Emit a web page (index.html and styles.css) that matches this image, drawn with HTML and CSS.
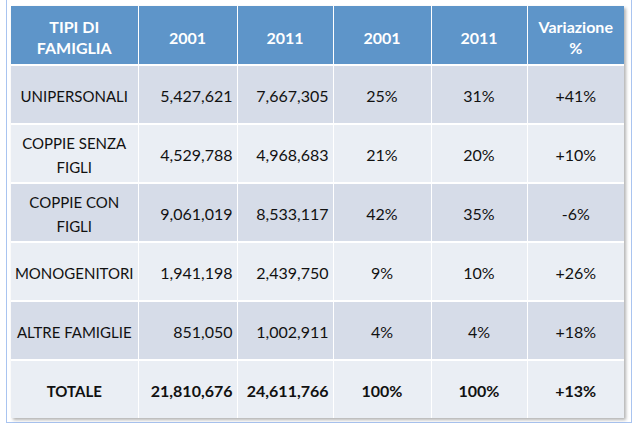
FILE: index.html
```html
<!DOCTYPE html>
<html>
<head>
<meta charset="utf-8">
<link rel="stylesheet" href="styles.css">
</head>
<body>
<div class="frame">
  <table class="data">
    <colgroup>
      <col class="c1"><col class="c2"><col class="c3"><col class="c4"><col class="c5"><col class="c6">
    </colgroup>
    <thead>
      <tr>
        <th>TIPI DI<br>FAMIGLIA</th>
        <th>2001</th>
        <th>2011</th>
        <th>2001</th>
        <th>2011</th>
        <th>Variazione<br>%</th>
      </tr>
    </thead>
    <tbody>
      <tr class="odd">
        <td class="name">UNIPERSONALI</td>
        <td class="num">5,427,621</td>
        <td class="num">7,667,305</td>
        <td>25%</td>
        <td>31%</td>
        <td>+41%</td>
      </tr>
      <tr class="even">
        <td class="name">COPPIE SENZA<br>FIGLI</td>
        <td class="num">4,529,788</td>
        <td class="num">4,968,683</td>
        <td>21%</td>
        <td>20%</td>
        <td>+10%</td>
      </tr>
      <tr class="odd">
        <td class="name">COPPIE CON<br>FIGLI</td>
        <td class="num">9,061,019</td>
        <td class="num">8,533,117</td>
        <td>42%</td>
        <td>35%</td>
        <td>-6%</td>
      </tr>
      <tr class="even">
        <td class="name">MONOGENITORI</td>
        <td class="num">1,941,198</td>
        <td class="num">2,439,750</td>
        <td>9%</td>
        <td>10%</td>
        <td>+26%</td>
      </tr>
      <tr class="odd">
        <td class="name">ALTRE FAMIGLIE</td>
        <td class="num">851,050</td>
        <td class="num">1,002,911</td>
        <td>4%</td>
        <td>4%</td>
        <td>+18%</td>
      </tr>
      <tr class="even total">
        <td class="name">TOTALE</td>
        <td class="num">21,810,676</td>
        <td class="num">24,611,766</td>
        <td>100%</td>
        <td>100%</td>
        <td>+13%</td>
      </tr>
    </tbody>
  </table>
</div>
</body>
</html>
```

FILE: styles.css
```css
html, body {
  margin: 0;
  padding: 0;
  background: #ffffff;
}

body {
  width: 638px;
  height: 432px;
  overflow: hidden;
  font-family: Lato, "Open Sans", "Liberation Sans", sans-serif;
  font-size: 16px;
  color: #111111;
}

.frame {
  margin-left: 6px;
  width: 626px;
  height: 423px;
  border-left: 1px solid #a9c4f0;
  border-right: 1px solid #a9c4f0;
  border-bottom: 1px solid #a9c4f0;
  padding: 6px 0 0 4px;
  box-sizing: border-box;
}

.data {
  width: 613px;
  table-layout: fixed;
  border-collapse: collapse;
  box-shadow: 2px 2px 3px rgba(0, 0, 0, 0.3);
}

.c1 { width: 127px; }
.c2 { width: 99px; }
.c3 { width: 96px; }
.c4 { width: 98px; }
.c5 { width: 96px; }
.c6 { width: 97px; }

.data th {
  background: #5e95c9;
  color: #ffffff;
  font-weight: bold;
  height: 54px;
  line-height: 21px;
  padding: 4px 2px 0;
  text-align: center;
  vertical-align: middle;
  border-left: 1px solid #ffffff;
  border-bottom: 2px solid #ffffff;
}

.data td {
  height: 54px;
  line-height: 24px;
  padding: 3px 4px 0;
  text-align: center;
  vertical-align: middle;
  border-left: 1px solid #ffffff;
  border-top: 2px solid #ffffff;
}

.data td.name {
  font-size: 15px;
  white-space: nowrap;
  padding-left: 2px;
  padding-right: 2px;
}

.data th:first-child,
.data td:first-child {
  border-left: none;
}

.data tbody tr:first-child td {
  border-top: none;
}

.odd td {
  background: #d6dce8;
}

.even td {
  background: #eaeef4;
}

.data td.num {
  text-align: right;
}

.total td {
  font-weight: bold;
}
```
